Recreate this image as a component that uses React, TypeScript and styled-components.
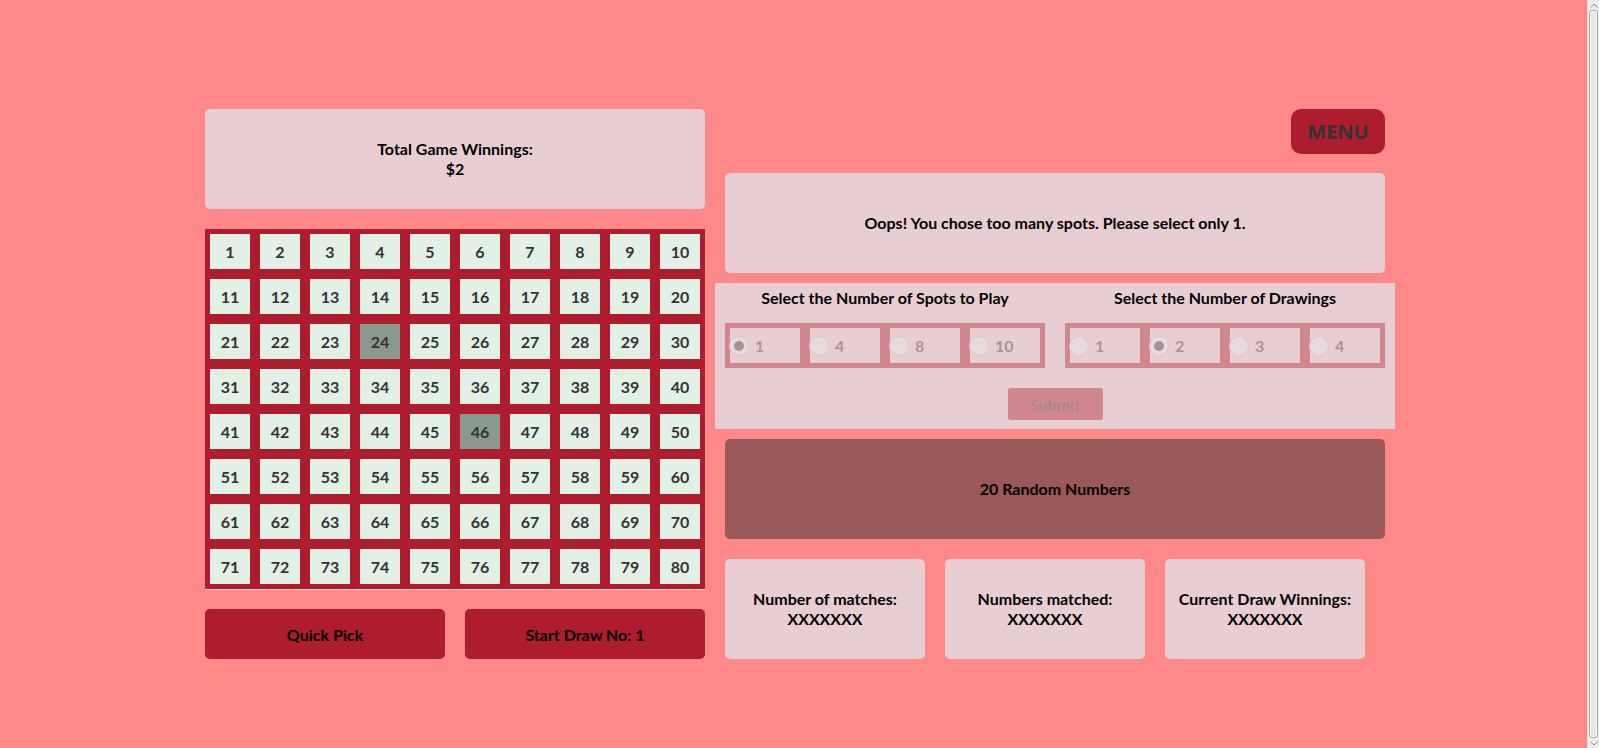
import React from "react";
import styled, { createGlobalStyle } from "styled-components";

const GlobalStyle = createGlobalStyle`
  html, body {
    margin: 0;
    padding: 0;
    overflow: hidden;
  }
  body {
    background: #ff8888;
    font-family: Lato, "Open Sans", sans-serif;
    color: #000;
  }
  * { box-sizing: border-box; }
`;

const Page = styled.div`
  display: flex;
  align-items: flex-start;
  padding: 109px 0 0 205px;
  height: 748px;
`;

const ScrollTrack = styled.div`
  position: fixed;
  top: 0;
  right: 0;
  width: 12px;
  height: 100%;
  background: #ececec;
  border-left: 1px solid #e0e0e0;
  display: flex;
  flex-direction: column;
  align-items: center;
  padding: 2px 0;
`;

const ScrollArrow = styled.div`
  height: 6px;
  width: 10px;
  display: flex;
  align-items: center;
  justify-content: center;
`;

const ScrollThumb = styled.div`
  flex: 1;
  width: 9px;
  margin: 2px 0;
  background: #e6e6e6;
  border: 1px solid #a9a9a9;
  border-radius: 3px;
  box-shadow: inset 0 0 0 1px #f8f8f8;
`;

const LeftColumn = styled.div`
  width: 500px;
  display: flex;
  flex-direction: column;
`;

const RightColumn = styled.div`
  width: 680px;
  margin-left: 10px;
  display: flex;
  flex-direction: column;
`;

const InfoBox = styled.div<{ $w?: number; $bg?: string }>`
  height: 100px;
  width: ${(p) => (p.$w ? `${p.$w}px` : "auto")};
  background: ${(p) => p.$bg || "#e8ced2"};
  border-radius: 5px;
  display: flex;
  flex-direction: column;
  align-items: center;
  justify-content: center;
  font-weight: 700;
  font-size: 16px;
  line-height: 20px;
  text-align: center;
`;

const Board = styled.div`
  margin-top: 20px;
  background: #ad1d2e;
  display: grid;
  grid-template-columns: repeat(10, 50px);
  border-bottom: 1px solid #ecd6d8;
`;

const Cell = styled.div<{ $selected?: boolean }>`
  margin: 5px;
  height: 35px;
  background: ${(p) => (p.$selected ? "#8a998d" : "#e2f0e6")};
  color: #333;
  font-weight: 700;
  font-size: 16px;
  display: flex;
  align-items: center;
  justify-content: center;
`;

const ButtonRow = styled.div`
  margin-top: 19px;
  display: flex;
  gap: 20px;
`;

const ActionButton = styled.button`
  width: 240px;
  height: 50px;
  border: none;
  border-radius: 5px;
  background: #ad1d2e;
  color: #000;
  font-family: inherit;
  font-weight: 700;
  font-size: 16px;
  padding: 0;
`;

const MenuRow = styled.div`
  height: 45px;
  padding: 0 10px;
  display: flex;
  justify-content: flex-end;
`;

const MenuButton = styled.button`
  width: 94px;
  height: 45px;
  border: none;
  border-radius: 10px;
  background: #ad1d2e;
  color: #333;
  font-family: "Open Sans", sans-serif;
  font-weight: 700;
  font-size: 20px;
  padding: 0;
`;

const Spaced = styled.div<{ $top: number }>`
  margin: ${(p) => p.$top}px 10px 0;
`;

const SettingsPanel = styled.div`
  margin-top: 10px;
  height: 146px;
  background: #e8ced2;
  padding: 5px 10px 0;
  display: flex;
  flex-direction: column;
  align-items: center;
`;

const GroupsRow = styled.div`
  display: flex;
  gap: 20px;
`;

const GroupColumn = styled.div`
  width: 320px;
  display: flex;
  flex-direction: column;
  align-items: center;
`;

const GroupTitle = styled.div`
  font-weight: 700;
  font-size: 16px;
  line-height: 20px;
  height: 20px;
  margin-bottom: 15px;
  white-space: nowrap;
`;

const RadioGroup = styled.div`
  width: 320px;
  height: 45px;
  background: #d0878f;
  display: flex;
`;

const RadioItem = styled.label`
  width: 70px;
  height: 35px;
  margin: 5px;
  background: #e8ced2;
  display: flex;
  align-items: center;
  color: #a8959a;
  font-weight: 700;
  font-size: 16px;
`;

const RadioCircle = styled.span<{ $checked?: boolean }>`
  width: 20px;
  height: 20px;
  margin-left: -1px;
  margin-right: 6px;
  border-radius: 50%;
  background: #e9dadd;
  border: 1px solid #dbc7cb;
  display: flex;
  align-items: center;
  justify-content: center;
  flex-shrink: 0;
  &::after {
    content: "";
    width: 10px;
    height: 10px;
    border-radius: 50%;
    background: ${(p) => (p.$checked ? "#a69397" : "transparent")};
  }
`;

const SubmitButton = styled.button`
  margin-top: 20px;
  width: 95px;
  height: 32px;
  border: none;
  border-radius: 3px;
  background: #d0878f;
  color: #a9878b;
  font-family: inherit;
  font-weight: 700;
  font-size: 16px;
  padding: 0;
`;

const ResultsRow = styled.div`
  margin: 20px 10px 0;
  display: flex;
  gap: 20px;
`;

const numbers = Array.from({ length: 80 }, (_, i) => i + 1);
const selected = new Set([24, 46]);

function Group({ title, options, checked }: { title: string; options: number[]; checked: number }) {
  return (
    <GroupColumn>
      <GroupTitle>{title}</GroupTitle>
      <RadioGroup>
        {options.map((o) => (
          <RadioItem key={o}>
            <RadioCircle $checked={o === checked} />
            {o}
          </RadioItem>
        ))}
      </RadioGroup>
    </GroupColumn>
  );
}

function Chevron({ up }: { up?: boolean }) {
  return (
    <svg width="8" height="5" viewBox="0 0 8 5">
      <path
        d={up ? "M0.5 4.5 L4 1 L7.5 4.5" : "M0.5 0.5 L4 4 L7.5 0.5"}
        fill="none"
        stroke="#8a8a8a"
        strokeWidth="1"
      />
    </svg>
  );
}

export default function App() {
  return (
    <>
      <GlobalStyle />
      <Page>
        <LeftColumn>
          <InfoBox>
            <div>Total Game Winnings:</div>
            <div>$2</div>
          </InfoBox>
          <Board>
            {numbers.map((n) => (
              <Cell key={n} $selected={selected.has(n)}>
                {n}
              </Cell>
            ))}
          </Board>
          <ButtonRow>
            <ActionButton>Quick Pick</ActionButton>
            <ActionButton>Start Draw No: 1</ActionButton>
          </ButtonRow>
        </LeftColumn>
        <RightColumn>
          <MenuRow>
            <MenuButton>MENU</MenuButton>
          </MenuRow>
          <Spaced $top={19}>
            <InfoBox>Oops! You chose too many spots. Please select only 1.</InfoBox>
          </Spaced>
          <SettingsPanel>
            <GroupsRow>
              <Group title="Select the Number of Spots to Play" options={[1, 4, 8, 10]} checked={1} />
              <Group title="Select the Number of Drawings" options={[1, 2, 3, 4]} checked={2} />
            </GroupsRow>
            <SubmitButton>Submit</SubmitButton>
          </SettingsPanel>
          <Spaced $top={10}>
            <InfoBox $bg="#9a5858">20 Random Numbers</InfoBox>
          </Spaced>
          <ResultsRow>
            <InfoBox $w={200}>
              <div>Number of matches:</div>
              <div>XXXXXXX</div>
            </InfoBox>
            <InfoBox $w={200}>
              <div>Numbers matched:</div>
              <div>XXXXXXX</div>
            </InfoBox>
            <InfoBox $w={200}>
              <div>Current Draw Winnings:</div>
              <div>XXXXXXX</div>
            </InfoBox>
          </ResultsRow>
        </RightColumn>
      </Page>
      <ScrollTrack>
        <ScrollArrow>
          <Chevron up />
        </ScrollArrow>
        <ScrollThumb />
        <ScrollArrow>
          <Chevron />
        </ScrollArrow>
      </ScrollTrack>
    </>
  );
}
